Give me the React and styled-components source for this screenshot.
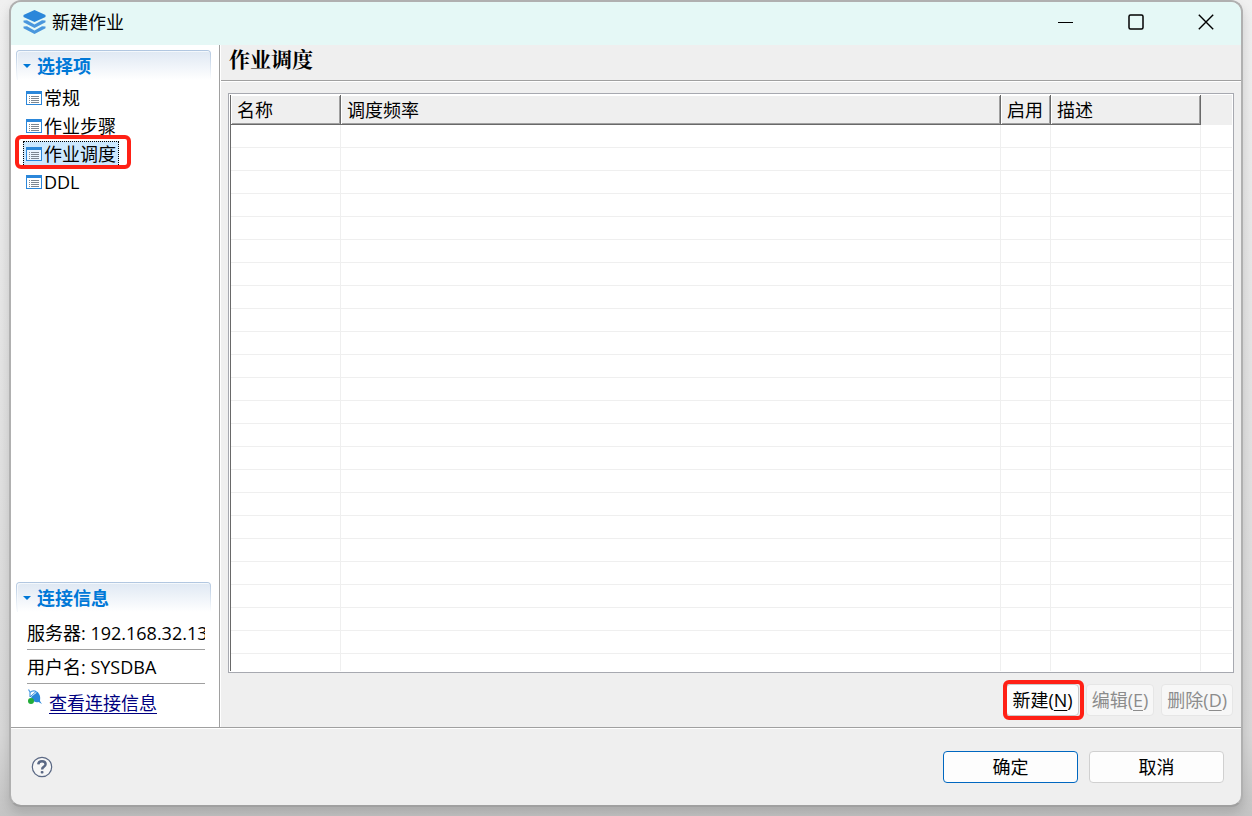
import React from 'react';
import { useState } from 'react';
import styled, { createGlobalStyle } from 'styled-components';


//pages of the dialog
const pages = ['常规', '作业步骤', '作业调度', 'DDL'];

//the grid is always filled with blank rows
const blankRows = Array.from({ length: 24 }, (_, i) => i);

const App = () => {

    const [page, setPage] = useState('作业调度');

    return (
        <Desktop>
            <GlobalStyle />
            <Dialog>
                <TitleBar>
                    <LogoIcon />
                    <Title>新建作业</Title>
                    <WindowButton aria-label="最小化">
                        <svg width="16" height="16"><path d="M0 8.500H15" stroke="#000" /></svg>
                    </WindowButton>
                    <WindowButton aria-label="最大化">
                        <svg width="16" height="16"><rect x="1" y="1" width="14" height="14" rx="1.500" fill="none" stroke="#000" strokeWidth="1.500" /></svg>
                    </WindowButton>
                    <WindowButton aria-label="关闭">
                        <svg width="16" height="16"><path d="M.8 .8L15.200 15.200M15.200 .8L.8 15.200" stroke="#000" strokeWidth="1.400" /></svg>
                    </WindowButton>
                </TitleBar>
                <Body>
                    <Sidebar>
                        <Section>
                            <SectionTitle><Arrow />选择项</SectionTitle>
                            <NavList>
                                {pages.map((name) => (
                                    <li key={name}>
                                        <NavItem $active={name === page} onClick={() => setPage(name)}>
                                            <PageIcon />
                                            {name}
                                            {name === page && <NavMark />}
                                        </NavItem>
                                    </li>
                                ))}
                            </NavList>
                        </Section>
                        <Section>
                            <SectionTitle><Arrow />连接信息</SectionTitle>
                            <Info>服务器: 192.168.32.13</Info>
                            <Info>用户名: SYSDBA</Info>
                            <LinkRow>
                                <PlugIcon />
                                <a href="#connection">查看连接信息</a>
                            </LinkRow>
                        </Section>
                    </Sidebar>
                    <Main>
                        <Heading>作业调度</Heading>
                        <Content>
                            <TableFrame>
                                <TableClip>
                                    <Table>
                                        <colgroup>
                                            <Col $width={110} />
                                            <col />
                                            <Col $width={50} />
                                            <Col $width={150} />
                                            <Col $width={31} />
                                        </colgroup>
                                        <thead>
                                            <tr>
                                                <th>名称</th>
                                                <th>调度频率</th>
                                                <th>启用</th>
                                                <th>描述</th>
                                                <td />
                                            </tr>
                                        </thead>
                                        <tbody>
                                            {blankRows.map((row) => (
                                                <tr key={row}>
                                                    <td /><td /><td /><td /><td />
                                                </tr>
                                            ))}
                                        </tbody>
                                    </Table>
                                </TableClip>
                            </TableFrame>
                            <Actions>
                                <SmallButton>新建(<u>N</u>)<ButtonMark /></SmallButton>
                                <SmallButton disabled>编辑(<u>E</u>)</SmallButton>
                                <SmallButton disabled>删除(<u>D</u>)</SmallButton>
                            </Actions>
                        </Content>
                    </Main>
                </Body>
                <Footer>
                    <HelpButton aria-label="帮助">
                        <HelpIcon />
                    </HelpButton>
                    <FooterButton $primary>确定</FooterButton>
                    <FooterButton>取消</FooterButton>
                </Footer>
            </Dialog>
        </Desktop>
    )
}
export default App;


const LogoIcon = () => (
    <svg width="24" height="26" viewBox="0 0 24 26">
        <path d="M11.500 1L22.500 6V8L11.500 13L.5 8V6Z" fill="#2b87da" />
        <path d="M.5 11.500L4 11.300L11.500 15.500L19 11.300L22.500 11.500V13.300L11.500 19L.5 13.300Z" fill="#4a97dd" />
        <path d="M.5 17.500L4 17.300L11.500 21.500L19 17.300L22.500 17.500V19.300L11.500 25L.5 19.300Z" fill="#4a97dd" />
    </svg>
)

const Arrow = () => (
    <svg width="8" height="4"><path d="M0 0H8L4 4Z" fill="#0078d7" /></svg>
)

const PageIcon = () => (
    <svg width="16" height="14" shapeRendering="crispEdges">
        <rect x=".5" y=".5" width="15" height="13" fill="#fff" fillOpacity=".6" stroke="#2b87da" />
        <path d="M0 1.500H16" stroke="#2b87da" strokeWidth="3" />
        <path d="M3 5.500H4M3 7.500H4M3 9.500H4M3 11.500H4M5 5.500H13M5 7.500H13M5 9.500H13M5 11.500H13" stroke="#7d8791" />
    </svg>
)

const PlugIcon = () => (
    <svg width="16" height="16" viewBox="0 0 16 16">
        <path d="M1.500 .5L3 3M3 8V3.500Q5 1.500 8 2L11 4" fill="none" stroke="#4a9ae2" strokeWidth="1.200" />
        <path d="M4 8L10.500 3Q14 6 13 12L15 15L11.500 13Q8 14 6 11.500Z" fill="#2b87da" />
        <path d="M3 8L9 2.500" stroke="#2b87da" strokeWidth="1" />
        <circle cx="4" cy="12" r="3" fill="#22ac38" />
    </svg>
)

const HelpIcon = () => (
    <svg width="22" height="22" viewBox="0 0 22 22" fill="none">
        <circle cx="11" cy="11" r="9.700" fill="#f6f6f6" stroke="#5a6884" strokeWidth="1.200" />
        <path d="M7.300 8.300Q7.500 5.200 11 5.200Q14.600 5.200 14.600 8.200Q14.600 9.800 12.700 10.900Q11.100 11.800 11.100 13.500" stroke="#5a6884" strokeWidth="2.400" />
        <rect x="9.700" y="15" width="2.800" height="2.600" rx="1" fill="#5a6884" />
    </svg>
)

const GlobalStyle = createGlobalStyle`
  * {
    box-sizing: border-box;
  }
  body {
    margin: 0;
    color: #000;
    font-family: "Open Sans", "Noto Sans CJK SC", sans-serif;
    font-size: 18px;
    line-height: 28px;
  }
  button {
    font: inherit;
    color: inherit;
    padding: 0;
    border: none;
    background: none;
    white-space: nowrap;
  }
  svg {
    display: block;
    flex: none;
  }
`

const Desktop = styled.div`
  height: 100vh;
  min-height: 480px;
  display: flex;
  padding: 0 9px 9px;
  background: linear-gradient(#f0f0f0, #d8d8d8 90%, #c4c4c4);
`

const Dialog = styled.div`
  flex: 1;
  min-width: 0;
  display: flex;
  flex-direction: column;
  overflow: hidden;
  border: 2px solid #b0b0b0;
  border-bottom-color: #a0a0a0;
  border-radius: 12px;
  background: #efefef;
  box-shadow: 0 6px 12px rgba(0, 0, 0, 0.15);
`

const TitleBar = styled.header`
  height: 43px;
  flex: none;
  display: flex;
  align-items: center;
  padding: 0 0 3px 12px;
  background: #e5f8f6;
`

const Title = styled.div`
  flex: 1;
  margin-left: 5px;
`

const WindowButton = styled.button`
  width: 70px;
  height: 100%;
  display: flex;
  align-items: center;
  justify-content: center;
`

const Body = styled.div`
  flex: 1;
  min-height: 0;
  display: flex;
`

const Sidebar = styled.aside`
  width: 209px;
  flex: none;
  display: flex;
  flex-direction: column;
  justify-content: space-between;
  padding: 5px 8px 8px 5px;
  border-right: 1px solid #a0a0a0;
  background: #fff;
`

const Section = styled.section`
  display: flex;
  flex-direction: column;
`

const SectionTitle = styled.h2`
  height: 30px;
  display: flex;
  align-items: center;
  gap: 6px;
  margin: 0 0 4px;
  padding-left: 6px;
  border: 1px solid transparent;
  border-bottom: none;
  border-radius: 4px 4px 0 0;
  //white inset line, then the blue outline that fades to the bottom
  background:
    linear-gradient(#dfe8f3, #fff) padding-box,
    linear-gradient(#b0c6e0, #fff) border-box;
  box-shadow: inset 1px 1px 0 #f4f8fc;
  color: #0078d7;
  font-size: 18px;
  font-weight: bold;
`

const NavList = styled.ul`
  margin: 0;
  padding: 0 0 0 7px;
  list-style: none;
  li {
    height: 28px;
    display: flex;
    align-items: center;
  }
`

const NavItem = styled.button`
  position: relative;
  height: 26px;
  display: flex;
  align-items: center;
  gap: 2px;
  padding: 0 2px;
  border: 1px dotted ${props => props.$active ? '#000' : 'transparent'};
  background: ${props => props.$active ? '#cce8ff' : 'none'};
`

//red frame around the thing to click
const Mark = styled.span`
  position: absolute;
  border: 4px solid #ff2015;
  border-radius: 6px;
  pointer-events: none;
`

const NavMark = styled(Mark)`
  inset: -7px -13px -3px -9px;
`

const ButtonMark = styled(Mark)`
  inset: -5px -6px -5px -4px;
`

const Info = styled.div`
  height: 34px;
  margin: 0 6px 0 11px;
  padding-top: 3px;
  overflow: hidden;
  white-space: nowrap;
  border-bottom: 1px solid #a0a0a0;
`

const LinkRow = styled.div`
  display: flex;
  align-items: flex-start;
  gap: 6px;
  padding: 5px 0 2px 11px;
  a {
    color: #000080;
    text-underline-offset: 3px;
  }
`

const Main = styled.main`
  flex: 1;
  min-width: 0;
  display: flex;
  flex-direction: column;
  border-left: 1px solid #fff;
`

const Heading = styled.h1`
  height: 36px;
  flex: none;
  margin: 0;
  padding: 1px 8px;
  border-bottom: 1px solid #a0a0a0;
  box-shadow: 0 1px 0 #fff;
  font-family: "Liberation Serif", "Noto Serif CJK SC", "Noto Sans CJK SC", serif;
  font-size: 21px;
  font-weight: bold;
`

const Content = styled.div`
  flex: 1;
  min-height: 0;
  display: flex;
  flex-direction: column;
  padding: 12px 7px 11px;
`

const TableFrame = styled.div`
  flex: 1;
  min-height: 0;
  display: flex;
  padding: 1px;
  border: 1px solid #a7a9b0;
  background: #fff;
`

const TableClip = styled.div`
  flex: 1;
  overflow: hidden;
  border-left: 1px solid #696969;
`

const Table = styled.table`
  width: 100%;
  table-layout: fixed;
  border-spacing: 0;
  th, td {
    padding: 0;
  }
  thead th {
    height: 30px;
    padding: 0 6px;
    border-right: 1px solid #696969;
    border-bottom: 1px solid #696969;
    box-shadow: inset 1px 1px 0 #fff, inset -1px -1px 0 #a0a0a0;
    background: #efefef;
    font-weight: normal;
    text-align: left;
    white-space: nowrap;
  }
  thead td {
    background: #efefef;
  }
  tbody td {
    height: 23px;
    border-right: 1px solid #efefef;
    border-bottom: 1px solid #efefef;
  }
  tbody td:last-child {
    border-right: none;
  }
`

const Col = styled.col`
  width: ${props => props.$width}px;
`

const Actions = styled.div`
  display: flex;
  justify-content: flex-end;
  gap: 7px;
  padding: 11px 1px 0 0;
`

const SmallButton = styled.button`
  position: relative;
  height: 32px;
  padding: 0 5px;
  border: 1px solid #c8c8c8;
  border-radius: 4px;
  background: #fdfdfd;
  &:disabled {
    color: #8c8c8c;
    border-color: #e6e6e6;
    background: #f7f7f7;
  }
  u {
    text-underline-offset: 3px;
  }
`

const Footer = styled.footer`
  height: 78px;
  flex: none;
  display: flex;
  align-items: center;
  gap: 11px;
  padding: 0 17px 0 20px;
  border-top: 1px solid #a0a0a0;
  box-shadow: inset 0 1px 0 #fff;
`

const HelpButton = styled.button`
  margin-right: auto;
`

const FooterButton = styled.button`
  width: 135px;
  height: 32px;
  border: 1px solid ${props => props.$primary ? '#0067c0' : '#d0d0d0'};
  border-radius: 4px;
  background: #fdfdfd;
`
